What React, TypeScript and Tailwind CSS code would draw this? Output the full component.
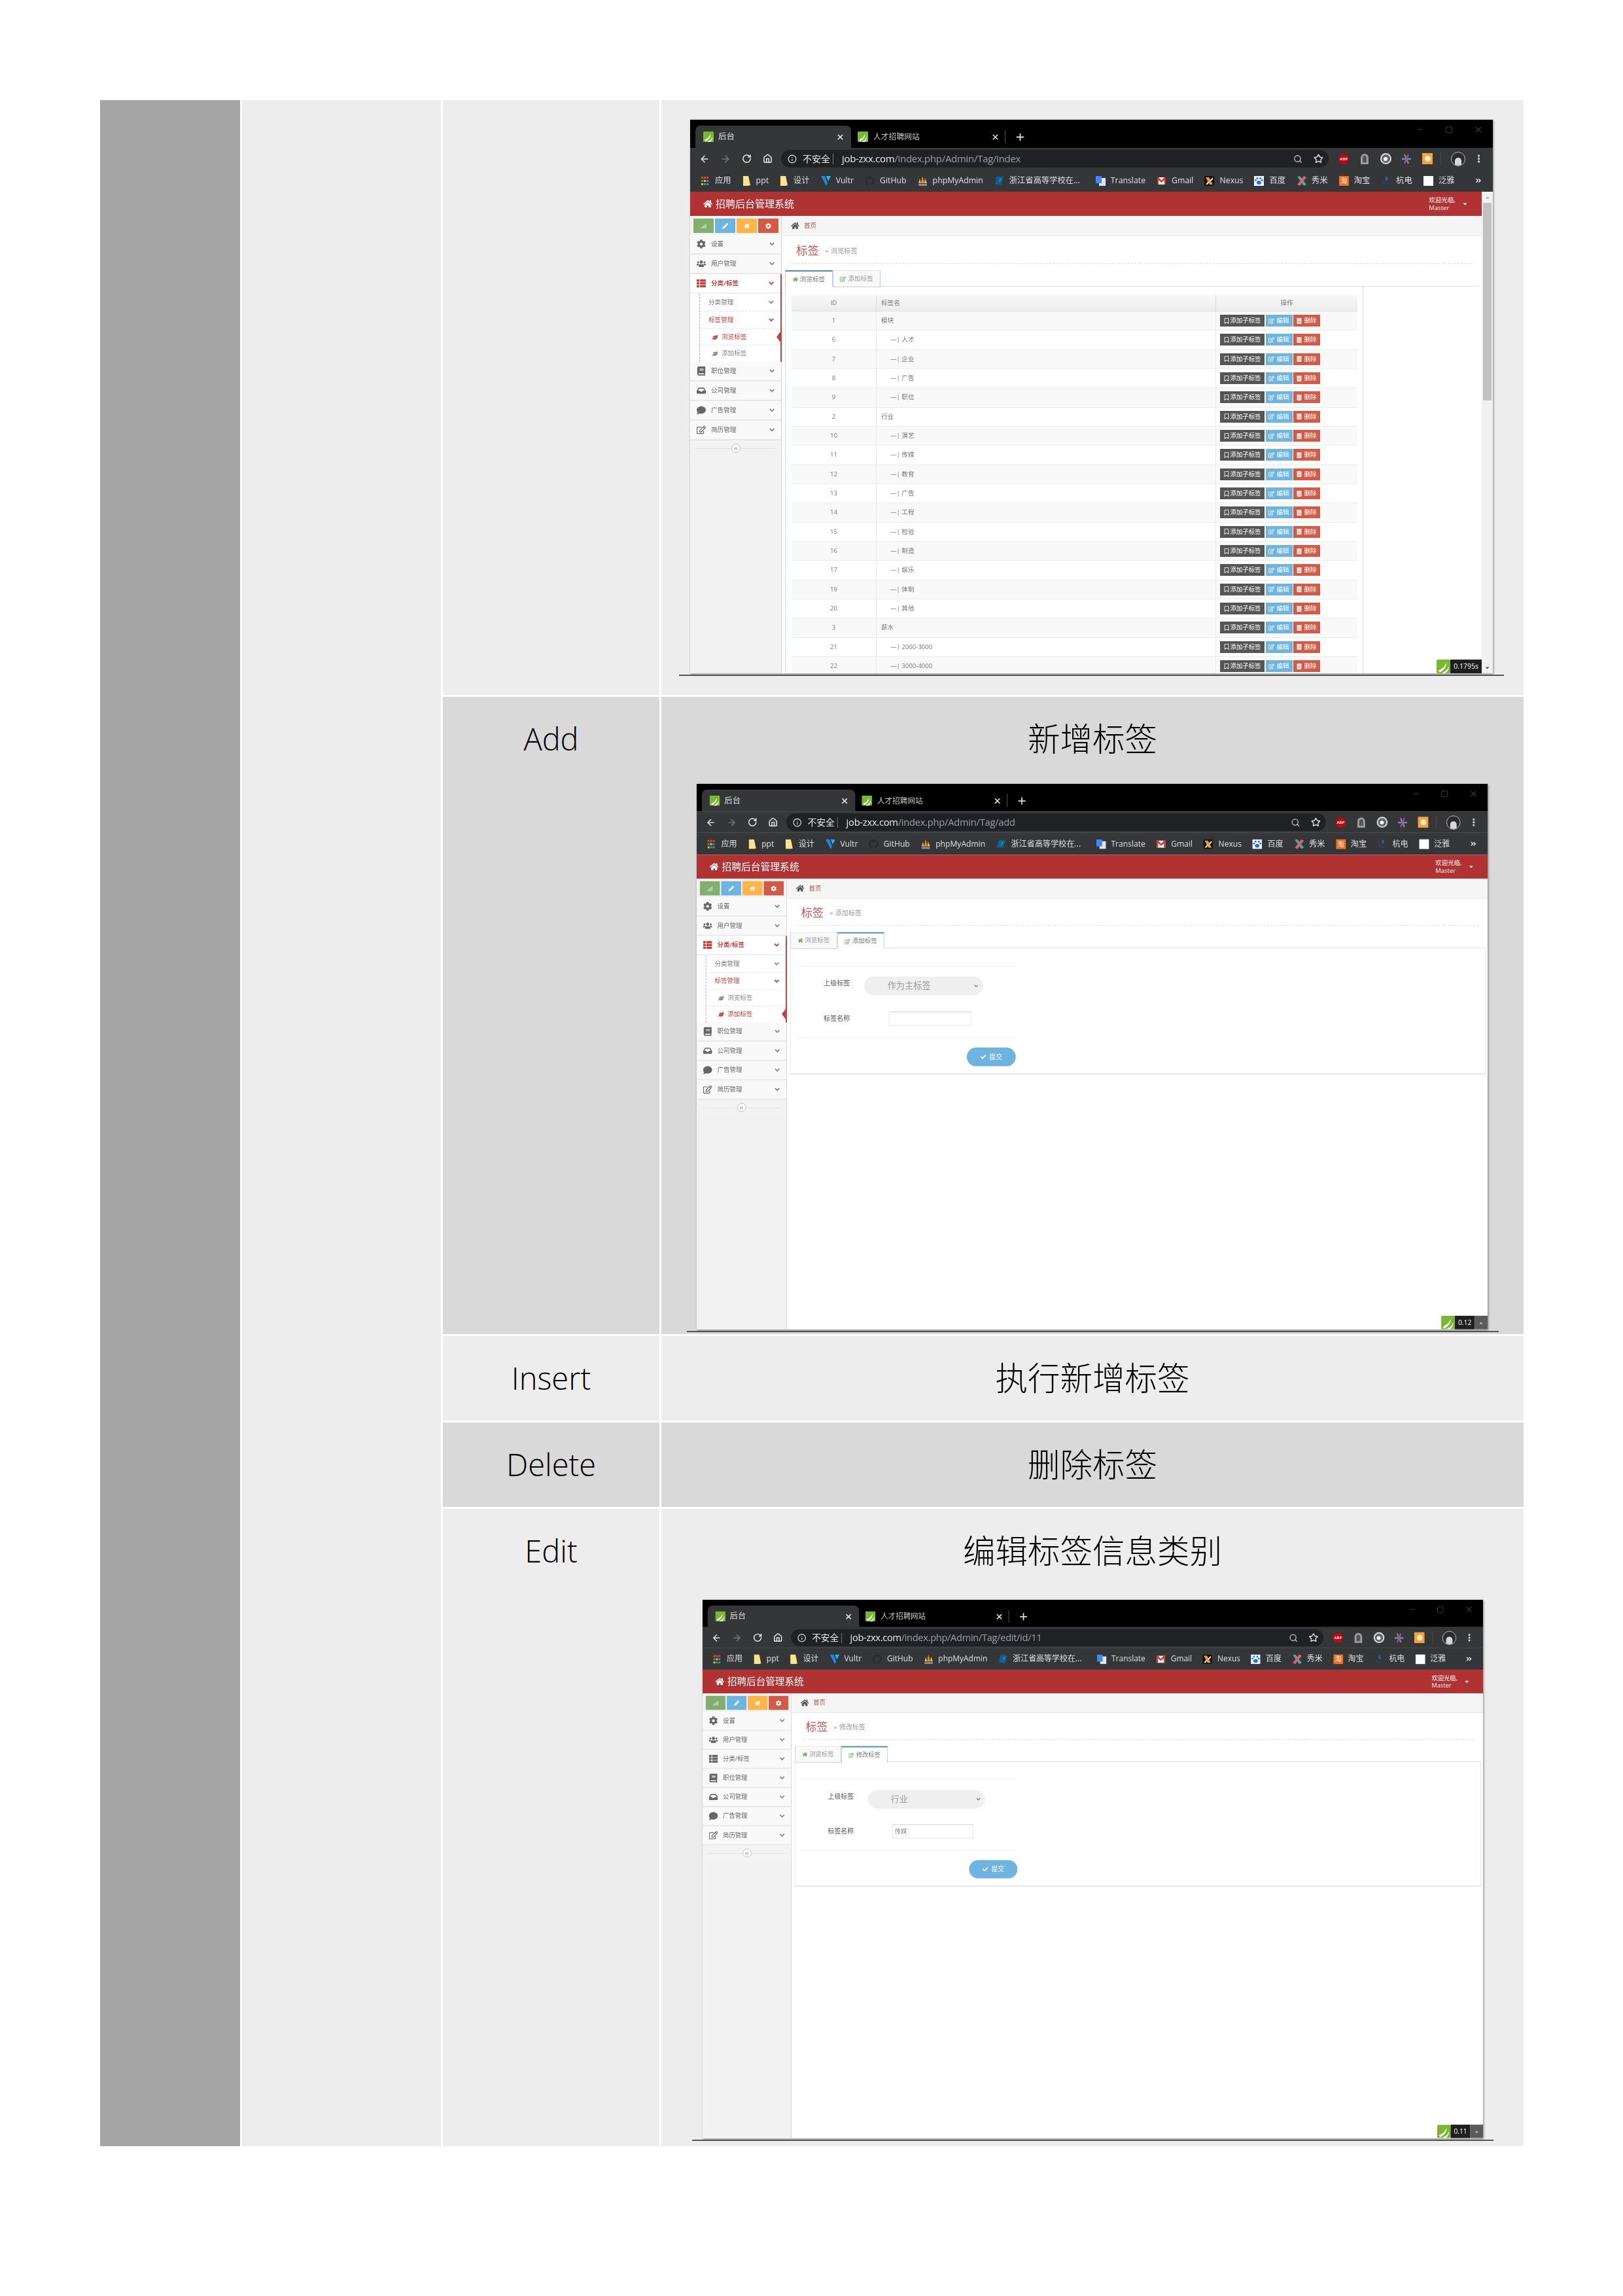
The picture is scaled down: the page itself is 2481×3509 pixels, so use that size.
import React from "react";
import {
  FaAngleDoubleLeft,
  FaAngleDoubleRight,
  FaAngleDown,
  FaBook,
  FaCaretDown,
  FaCaretUp,
  FaCheck,
  FaChevronDown,
  FaCog,
  FaComment,
  FaGithub,
  FaHome,
  FaInbox,
  FaLeaf,
  FaPencilAlt,
  FaRegBookmark,
  FaRegEdit,
  FaSignal,
  FaThList,
  FaTrashAlt,
  FaUsers,
} from "react-icons/fa";
import {
  ArrowLeft,
  ArrowRight,
  EllipsisVertical,
  House,
  Info,
  Minus,
  Plus,
  RotateCw,
  Search,
  Square,
  Star,
  X,
} from "lucide-react";

const BASE_WIDTH = 1227;
const BASE_HEIGHT = 846;

// favicon of the admin site
const Favicon = ({ className = "w-[16px] h-[16px]" }: { className?: string }) => (
  <svg viewBox="0 0 16 16" className={className}>
    <rect width="16" height="16" rx="1.5" fill="#7ab832" />
    <path d="M2 13 C5 11 9 10 11 4 C12 8 9 12 4 15 Z" fill="#fff" />
    <path d="M7 15 C10 14 13 12 14 8 C14.5 11 13 14 10 16 L7 16 Z" fill="#fff" />
  </svg>
);

const BookmarkIcon = ({ name }: { name: string }) => {
  const size = "w-[15px] h-[15px] shrink-0";
  switch (name) {
    case "apps":
      return (
        <svg viewBox="0 0 15 15" className={size}>
          {[
            ["#ea4335", 2, 1], ["#ea4335", 6, 1], ["#ea4335", 10, 1],
            ["#34a853", 2, 6], ["#fbbc05", 6, 6], ["#4285f4", 10, 6],
            ["#fbbc05", 2, 11], ["#4285f4", 6, 11], ["#34a853", 10, 11],
          ].map(([c, x, y], i) => (
            <rect key={i} x={x as number} y={y as number} width="3" height="3" fill={c as string} />
          ))}
        </svg>
      );
    case "folder":
      return (
        <svg viewBox="0 0 13 15" className="w-[13px] h-[15px] shrink-0">
          <path d="M1 0 H9 L12 14 L9 15 H1 Z" fill="#fbe38e" />
        </svg>
      );
    case "vultr":
      return (
        <svg viewBox="0 0 15 15" className={size}>
          <path d="M0 0 H6 L10 11 L8 15 Z" fill="#1e88e5" />
          <path d="M8 0 H15 L11 8 Z" fill="#29b6f6" />
        </svg>
      );
    case "github":
      return <FaGithub className={`${size} text-[#2a2b2d]`} />;
    case "pma":
      return (
        <svg viewBox="0 0 15 15" className={size}>
          <path d="M7 0 L10 11 H5 Z" fill="#f29111" />
          <path d="M3 4 L5 11 H1 Z" fill="#e9b85f" />
          <path d="M11 3 L14 11 H10 Z" fill="#e9b85f" />
          <rect x="1" y="12" width="13" height="3" fill="#8d8d9e" />
        </svg>
      );
    case "zj":
      return (
        <svg viewBox="0 0 15 15" className={size}>
          <path d="M3 1 H14 L11 13 H1 Z" fill="#0e5d9c" />
          <path d="M8 4 L11 4 L7 11 Z" fill="#1ea66a" />
        </svg>
      );
    case "translate":
      return (
        <svg viewBox="0 0 15 15" className={`${size} ml-[7px]`}>
          <rect x="5" y="3" width="10" height="12" fill="#dfe6f2" />
          <rect x="0" y="0" width="9" height="11" fill="#4285f4" />
        </svg>
      );
    case "gmail":
      return (
        <svg viewBox="0 0 15 15" className={size}>
          <rect x="1" y="2" width="13" height="11" fill="#f5f5f5" />
          <path d="M1 2 H3 L7.5 7 L12 2 H14 V13 H12 V6 L7.5 10 L3 6 V13 H1 Z" fill="#d93025" />
        </svg>
      );
    case "nexus":
      return (
        <svg viewBox="0 0 15 15" className={size}>
          <rect width="15" height="15" rx="2" fill="#111" />
          <path d="M2 2 L7 2 L13 13 L8 13 Z" fill="#f19a32" />
          <path d="M13 2 L8 7 L10 8 L13 5 Z M2 13 L6 8 L7 10 L5 13 Z" fill="#f7e1c2" />
        </svg>
      );
    case "baidu":
      return (
        <svg viewBox="0 0 15 15" className={size}>
          <rect width="15" height="15" fill="#f3f7ff" />
          <ellipse cx="7.5" cy="10" rx="3.5" ry="3" fill="#2b6ee6" />
          <circle cx="5" cy="3.5" r="1.5" fill="#2b6ee6" />
          <circle cx="10" cy="3.5" r="1.5" fill="#2b6ee6" />
          <circle cx="2.5" cy="6.5" r="1.4" fill="#2b6ee6" />
          <circle cx="12.5" cy="6.5" r="1.4" fill="#2b6ee6" />
        </svg>
      );
    case "xiumi":
      return (
        <svg viewBox="0 0 15 15" className={size}>
          <path d="M1 1 L5 0 L15 13 L11 15 Z" fill="#33b5a0" />
          <path d="M11 0 L15 2 L5 15 L1 13 Z" fill="#e85a71" />
        </svg>
      );
    case "taobao":
      return (
        <div className={`${size} bg-[#f2701f] text-white text-[10px] leading-[15px] text-center`}>淘</div>
      );
    case "hdu":
      return (
        <svg viewBox="0 0 15 15" className={size}>
          <path d="M2 8 C2 13 9 15 13 10 C10 12 5 12 4 7 Z" fill="#22407f" />
          <rect x="7" y="1" width="3" height="6" fill="#2d5fb3" />
        </svg>
      );
    default:
      return <div className={`${size} bg-white`} />;
  }
};

const bookmarks = [
  ["apps", "应用"], ["folder", "ppt"], ["folder", "设计"], ["vultr", "Vultr"],
  ["github", "GitHub"], ["pma", "phpMyAdmin"], ["zj", "浙江省高等学校在..."],
  ["translate", "Translate"], ["gmail", "Gmail"], ["nexus", "Nexus"], ["baidu", "百度"],
  ["xiumi", "秀米"], ["taobao", "淘宝"], ["hdu", "杭电"], ["blank", "泛雅"],
];

const BrowserChrome = ({ url }: { url: [string, string] }) => (
  <div className="flex flex-col shrink-0">
    {/* tab strip */}
    <div className="h-[43px] bg-black relative flex items-end pl-[8px]">
      <div className="w-[238px] h-[34px] bg-[#353637] rounded-t-[8px] flex items-center pl-[12px] pr-[10px] text-[#e4e4e4] text-[12.5px]">
        <Favicon />
        <span className="ml-[7px]">后台</span>
        <X className="ml-auto w-[13px] h-[13px]" strokeWidth={3} />
      </div>
      <div className="w-[235px] h-[34px] flex items-center pl-[10px] pr-[8px] text-[#c9c9c9] text-[11.8px]">
        <Favicon />
        <span className="ml-[8px]">人才招聘网站</span>
        <X className="ml-auto w-[13px] h-[13px] text-[#ddd]" strokeWidth={3} />
      </div>
      <div className="w-px h-[20px] bg-[#555] mb-[7px]" />
      <Plus className="ml-[14px] mb-[8px] w-[17px] h-[17px] text-[#ddd]" strokeWidth={2.5} />
      <div className="absolute right-[15px] top-[8px] flex items-center gap-[32px] text-[#3c3c3c]">
        <Minus className="w-[12px] h-[12px]" />
        <Square className="w-[12px] h-[13px]" />
        <X className="w-[14px] h-[14px]" />
      </div>
    </div>
    {/* toolbar */}
    <div className="h-[33px] bg-[#353637] flex items-center pl-[6px] pr-[13px] text-[#e8eaed]">
      <div className="w-[32px] flex justify-center"><ArrowLeft className="w-[16px] h-[16px]" strokeWidth={2.2} /></div>
      <div className="w-[32px] flex justify-center"><ArrowRight className="w-[16px] h-[16px] text-[#77797c]" strokeWidth={2.2} /></div>
      <div className="w-[32px] flex justify-center"><RotateCw className="w-[15px] h-[15px]" strokeWidth={2.4} /></div>
      <div className="w-[32px] flex justify-center"><House className="w-[15px] h-[15px]" strokeWidth={2.4} /></div>
      <div className="ml-[5px] flex-1 h-[27px] rounded-full bg-[#202124] flex items-center pl-[10px] pr-[8px]">
        <Info className="w-[14px] h-[14px]" />
        <span className="ml-[9px] text-[14px]">不安全</span>
        <div className="ml-[4px] w-px h-[16px] bg-[#777]" />
        <span className="ml-[13px] text-[15px] tracking-[-0.3px] whitespace-nowrap">
          {url[0]}
          <span className="text-[#9aa0a6]">{url[1]}</span>
        </span>
        <Search className="ml-auto w-[14px] h-[14px] text-[#c4c7c9]" strokeWidth={2.2} />
        <Star className="ml-[17px] w-[15px] h-[15px]" strokeWidth={2.2} />
      </div>
      <div className="ml-[7px] w-[32px] flex justify-center">
        <div className="w-[16px] h-[16px] rounded-full bg-[#c40510] text-white text-[6px] font-bold leading-[16px] text-center">ABP</div>
      </div>
      <div className="w-[32px] flex justify-center">
        <div className="w-[12px] h-[16px] rounded-t-full border-[3px] border-[#9b9b9b] bg-[#555]" />
      </div>
      <div className="w-[32px] flex justify-center">
        <div className="w-[17px] h-[17px] rounded-full border-[2px] border-[#ddd] bg-[#666] flex items-center justify-center">
          <div className="w-[6px] h-[6px] rounded-full bg-white" />
        </div>
      </div>
      <div className="w-[32px] flex justify-center">
        <svg viewBox="0 0 16 16" className="w-[16px] h-[16px]">
          <path d="M1 8 H15" stroke="#3ea7e8" strokeWidth="2.4" />
          <path d="M5 1 L11 15" stroke="#e8662b" strokeWidth="2.4" />
          <path d="M11 1 L5 15" stroke="#7b53c8" strokeWidth="2.4" />
        </svg>
      </div>
      <div className="w-[32px] flex justify-center">
        <div className="w-[16px] h-[17px] bg-[#f5a33b] flex items-center justify-center">
          <div className="w-[9px] h-[9px] rounded-full bg-[#fdeacb]" />
        </div>
      </div>
      <div className="mx-[4px] w-px h-[20px] bg-[#4a4a4a]" />
      <div className="w-[44px] flex justify-center">
        <div className="w-[22px] h-[22px] rounded-full bg-[#2c2c30] border border-[#bbb] flex justify-center items-end overflow-hidden">
          <div className="w-[10px] h-[12px] rounded-t-full bg-[#d8d8d8]" />
        </div>
      </div>
      <div className="w-[18px] flex justify-center"><EllipsisVertical className="w-[15px] h-[15px]" strokeWidth={3} /></div>
    </div>
    {/* bookmarks */}
    <div className="h-[34px] bg-[#353637] flex items-center pl-[15px] gap-[17px] text-[#dfe1e5] text-[12.3px] relative">
      {bookmarks.map(([icon, label], i) => (
        <div key={i} className="flex items-center gap-[8px] whitespace-nowrap">
          <BookmarkIcon name={icon} />
          <span>{label}</span>
        </div>
      ))}
      <FaAngleDoubleRight className="absolute right-[17px] top-[12px] w-[10px] h-[10px]" />
    </div>
  </div>
);

const Chevron = ({ className = "text-[#8a8a8a]" }: { className?: string }) => (
  <FaAngleDown className={`ml-auto mr-[8px] w-[12px] h-[12px] ${className}`} />
);

const MenuItem = ({ icon, label, open = false }: { icon: React.ReactNode; label: string; open?: boolean }) => (
  <div
    className={`h-[30px] flex items-center pl-[9px] border-b-2 ${
      open ? "bg-white border-[#eeeeee] text-[#c5403f] font-semibold" : "bg-[#f9f9f9] border-[#e8e8e8] text-[#666]"
    }`}
  >
    <span className="w-[15px] flex justify-center text-[14px]">{icon}</span>
    <span className="ml-[8px] text-[9.6px]">{label}</span>
    <Chevron className={open ? "text-[#c5403f]" : "text-[#8a8a8a]"} />
  </div>
);

const Sidebar = ({ active }: { active: "browse" | "add" | null }) => (
  <div className="w-[140px] shrink-0 bg-[#f2f2f2] border-r border-[#d5d5d5] flex flex-col">
    <div className="h-[29px] pt-[4px] pl-[5px] flex gap-[2px]">
      <div className="w-[31px] h-[22px] bg-[#82af6f] flex items-center justify-center text-[#cfe2c6] text-[9px]"><FaSignal /></div>
      <div className="w-[31px] h-[22px] bg-[#6fb3e0] flex items-center justify-center text-white text-[9px]"><FaPencilAlt /></div>
      <div className="w-[31px] h-[22px] bg-[#ffb44b] flex items-center justify-center text-white text-[9px]"><FaHome /></div>
      <div className="w-[31px] h-[22px] bg-[#d15b47] flex items-center justify-center text-white text-[9px]"><FaCog /></div>
    </div>
    <MenuItem icon={<FaCog />} label="设置" />
    <MenuItem icon={<FaUsers />} label="用户管理" />
    {active ? (
      <div className="border-r-2 border-[#c9413f] -mr-px relative">
        <MenuItem icon={<FaThList className="text-[#c5403f]" />} label="分类/标签" open />
        <div className="bg-white pl-[14px]">
          <div className="border-l border-dashed border-[#e39a9a]">
            <div className="h-[27px] flex items-center pl-[13px] text-[9.6px] text-[#777] border-b border-dashed border-[#e4e4e4]">
              分类管理
              <Chevron />
            </div>
            <div className="h-[27px] flex items-center pl-[13px] text-[9.6px] text-[#c5403f] border-b border-dashed border-[#e4e4e4]">
              标签管理
              <Chevron className="text-[#c5403f]" />
            </div>
            <div className={`h-[25px] flex items-center pl-[18px] text-[9.6px] border-b border-dashed border-[#e4e4e4] ${active === "browse" ? "text-[#c5403f]" : "text-[#888]"}`}>
              <FaLeaf className="w-[9px] h-[9px] mr-[6px]" />
              浏览标签
            </div>
            <div className={`h-[25px] flex items-center pl-[18px] text-[9.6px] ${active === "add" ? "text-[#c5403f]" : "text-[#888]"}`}>
              <FaLeaf className="w-[9px] h-[9px] mr-[6px]" />
              添加标签
            </div>
          </div>
        </div>
        {/* little red arrow that points at the open page */}
        <div
          className={`absolute right-0 w-0 h-0 border-y-[8px] border-y-transparent border-r-[6px] border-r-[#c9413f] ${
            active === "browse" ? "top-[88px]" : "top-[113px]"
          }`}
        />
      </div>
    ) : (
      <MenuItem icon={<FaThList />} label="分类/标签" />
    )}
    <MenuItem icon={<FaBook />} label="职位管理" />
    <MenuItem icon={<FaInbox />} label="公司管理" />
    <MenuItem icon={<FaComment />} label="广告管理" />
    <MenuItem icon={<FaRegEdit />} label="简历管理" />
    <div className="h-[24px] bg-[#f3f3f3] flex items-center px-[8px]">
      <div className="h-px flex-1 bg-[#e0e0e0]" />
      <div className="w-[14px] h-[14px] rounded-full border border-[#c0c0c0] bg-white flex items-center justify-center text-[#aaa] text-[7px]">
        <FaAngleDoubleLeft />
      </div>
      <div className="h-px flex-1 bg-[#e0e0e0]" />
    </div>
  </div>
);

const Tabs = ({ second, activeIndex }: { second: string; activeIndex: 0 | 1 }) => {
  const tab = (active: boolean) =>
    `w-[73px] h-[26px] -mb-px flex items-center justify-center gap-[3px] text-[9.6px] border-x border-[#c5d0dc] ${
      active ? "bg-white border-t-2 border-t-[#4c8fbd] text-[#777] z-10" : "bg-[#f9f9f9] border-t border-t-[#dfe6ec] text-[#999] border-b border-b-[#c5d0dc]"
    }`;
  return (
    <div className="h-[25px] flex border-b border-[#d5dfe6] mt-[10px] ml-[5px] mr-[3px]">
      <div className={tab(activeIndex === 0)}>
        <FaHome className="w-[8px] h-[8px] text-[#69aa46]" />
        浏览标签
      </div>
      <div className={tab(activeIndex === 1)}>
        <FaRegEdit className="w-[9px] h-[9px] text-[#69aa46]" />
        {second}
      </div>
    </div>
  );
};

const PageHead = ({ sub }: { sub: string }) => (
  <>
    <div className="h-[31px] shrink-0 bg-[#f5f5f5] border-b border-[#e8e8e8] flex items-center pl-[14px]">
      <FaHome className="w-[13px] h-[12px] text-[#555]" />
      <span className="ml-[7px] text-[9.6px] text-[#b5524f]">首页</span>
    </div>
    <div className="h-[42px] shrink-0 ml-[15px] mr-[14px] border-b border-dashed border-[#e0e0e0] flex items-center pl-[7px] pt-[2px]">
      <span className="text-[17.5px] text-[#c7595d]">标签</span>
      <FaAngleDoubleRight className="ml-[9px] w-[6px] h-[6px] text-[#aaa] mt-[3px]" />
      <span className="ml-[3px] text-[10.2px] text-[#999] mt-[3px]">{sub}</span>
    </div>
  </>
);

const tagRows: [string, string, boolean][] = [
  ["1", "模块", false], ["6", "人才", true], ["7", "企业", true], ["8", "广告", true],
  ["9", "职位", true], ["2", "行业", false], ["10", "演艺", true], ["11", "传媒", true],
  ["12", "教育", true], ["13", "广告", true], ["14", "工程", true], ["15", "检验", true],
  ["16", "制造", true], ["17", "娱乐", true], ["19", "体制", true], ["20", "其他", true],
  ["3", "薪水", false], ["21", "2000-3000", true], ["22", "3000-4000", true],
];

const TagTable = () => (
  <div className="w-[884px] ml-[5px] border-x border-[#d5dfe6] pl-[9px] pt-[13px] flex-1">
    <div className="w-[865px]">
      <div className="grid grid-cols-[130px_519px_216px] h-[25px] items-center text-[9.6px] text-[#777] bg-gradient-to-b from-[#f8f8f8] to-[#ececec] border-b border-[#ddd]">
        <div className="h-full flex items-center justify-center border-r border-[#ddd]">ID</div>
        <div className="h-full flex items-center pl-[7px] border-r border-[#ddd]">标签名</div>
        <div className="text-center">操作</div>
      </div>
      {tagRows.map(([id, name, child], i) => (
        <div
          key={id}
          className={`grid grid-cols-[130px_519px_216px] h-[29.33px] border-b border-[#ececec] text-[9.6px] text-[#777] ${
            i % 2 === 0 ? "bg-[#f9f9f9]" : "bg-white"
          }`}
        >
          <div className="h-full flex items-center justify-center border-r border-[#e8e8e8]">{id}</div>
          <div className="h-full flex items-center pl-[7px] border-r border-[#e8e8e8]">
            {child ? <span className="ml-[14px]">—|&nbsp;{name}</span> : name}
          </div>
          <div className="h-full flex items-center gap-[1.5px] pl-[6px] text-white">
            <div className="w-[68px] h-[18px] bg-[#555] flex items-center justify-center gap-[2px] whitespace-nowrap text-[9.4px]">
              <FaRegBookmark className="w-[8px] h-[9px]" />
              添加子标签
            </div>
            <div className="w-[41px] h-[18px] bg-[#6fb3e0] flex items-center justify-center gap-[3px]">
              <FaRegEdit className="w-[9px] h-[9px]" />
              编辑
            </div>
            <div className="w-[41px] h-[18px] bg-[#d15b47] flex items-center justify-center gap-[3px]">
              <FaTrashAlt className="w-[8px] h-[9px]" />
              删除
            </div>
          </div>
        </div>
      ))}
    </div>
  </div>
);

const TagForm = ({ parent, value }: { parent: string; value: string }) => (
  <div className="ml-[5px] mr-[3px] h-[196px] border border-t-0 border-[#e3e8ec] border-b-2 pt-[27px]">
    <div className="w-[340px] ml-[9px] flex flex-col">
      <div className="h-px bg-[#eeeeee]" />
      <div className="mt-[16px] flex pl-[42px]">
        <div className="w-[63px] text-[10.2px] text-[#555] pt-[3px]">上级标签</div>
        <div className="w-[184px] h-[29px] rounded-full bg-[#efefef] flex items-center pl-[36px] pr-[7px] text-[13.4px] text-[#999]">
          {parent}
          <FaChevronDown className="ml-auto w-[7px] h-[7px] text-[#666]" />
        </div>
      </div>
      <div className="mt-[25px] flex items-center pl-[42px]">
        <div className="w-[101px] text-[10.2px] text-[#555]">标签名称</div>
        <div className="w-[128px] h-[22px] border border-[#e5e5e5] border-t-[#cfcfcf] flex items-center pl-[3px] text-[9.6px] text-[#888]">
          {value}
        </div>
      </div>
      <div className="mt-[18px] h-px bg-[#eeeeee]" />
      <div className="mt-[15px] self-end w-[76px] h-[29px] rounded-full bg-[#6fb3e0] flex items-center justify-center gap-[5px] text-white text-[10px]">
        <FaCheck className="w-[9px] h-[9px]" />
        提交
      </div>
    </div>
  </div>
);

const Badge = ({ time, arrow }: { time: string; arrow: boolean }) => (
  <div className="absolute right-0 bottom-0 h-[21px] flex text-[10.5px] text-white z-20">
    <Favicon className="w-[21px] h-[21px]" />
    <div className="h-full px-[5px] bg-[#1f1f1f] flex items-center">{time}</div>
    {arrow && (
      <div className="h-full w-[20px] bg-[#5a5a5a] flex items-center justify-center text-[#ccc]">
        <FaCaretUp className="w-[8px] h-[8px]" />
      </div>
    )}
  </div>
);

const Scrollbar = () => (
  <div className="w-[17px] shrink-0 bg-[#f1f1f1] flex flex-col items-center text-[#a3a3a3]">
    <div className="h-[17px] flex items-center justify-center"><FaCaretUp className="w-[8px] h-[8px]" /></div>
    <div className="w-[13px] h-[302px] bg-[#c1c1c1]" />
    <div className="mt-auto h-[17px] flex items-center justify-center text-[#555]"><FaCaretDown className="w-[9px] h-[9px]" /></div>
  </div>
);

type ShotProps = {
  width: number;
  offset: number;
  lineWidth: number;
  url: [string, string];
  active: "browse" | "add" | null;
  sub: string;
  time: string;
  scroll?: boolean;
  children: React.ReactNode;
  tabs: React.ReactNode;
};

// A screenshot pasted in the document: drawn at one fixed size, then scaled to the size it has on the page
const BrowserShot = ({ width, offset, lineWidth, url, active, sub, time, scroll = false, children, tabs }: ShotProps) => {
  const scale = width / BASE_WIDTH;
  return (
    <div className="flex flex-col">
      <div className="overflow-hidden shadow-[1px_1px_3px_rgba(0,0,0,0.45)] relative" style={{ width, height: BASE_HEIGHT * scale }}>
        <div
          className="flex flex-col bg-white origin-top-left font-['Open_Sans','Noto_Sans_CJK_SC',sans-serif] blur-[0.5px]"
          style={{ width: BASE_WIDTH, height: BASE_HEIGHT, transform: `scale(${scale})` }}
        >
          <BrowserChrome url={url} />
          <div className="flex flex-1 min-h-0">
            <div className="flex-1 min-w-0 flex flex-col relative">
              <div className="h-[37px] shrink-0 bg-[#b03232] flex items-center pl-[20px] pr-[21px] text-white">
                <FaHome className="w-[14px] h-[13px]" />
                <span className="ml-[5px] text-[15px]">招聘后台管理系统</span>
                <div className="ml-auto text-[9.6px] leading-[12px]">
                  <div>欢迎光临,</div>
                  <div>Master</div>
                </div>
                <FaCaretDown className="ml-[10px] w-[9px] h-[9px]" />
              </div>
              <div className="flex flex-1 min-h-0 overflow-hidden">
                <Sidebar active={active} />
                <div className="flex-1 min-w-0 flex flex-col">
                  <PageHead sub={sub} />
                  {tabs}
                  {children}
                </div>
              </div>
              <Badge time={time} arrow={!scroll} />
            </div>
            {scroll && <Scrollbar />}
          </div>
        </div>
      </div>
      {/* rule of the document under the picture */}
      <div className="mt-[2px] h-[2px] bg-[#555]" style={{ width: lineWidth, marginLeft: -offset }} />
    </div>
  );
};

const CellLabel = ({ children, latin = false }: { children: React.ReactNode; latin?: boolean }) => (
  <div
    className={`h-[129px] flex items-center justify-center font-light text-black font-['Open_Sans','Noto_Sans_CJK_SC',sans-serif] ${
      latin ? "text-[47px]" : "text-[49.5px]"
    }`}
  >
    {children}
  </div>
);

export default function App() {
  return (
    <div className="w-[2481px] h-[3509px] bg-white pl-[153px] pt-[153px]">
      <div className="grid grid-cols-[214px_304px_331px_1318px] grid-rows-[909px_974px_129px_129px_974px] gap-[3px]">
        <div className="row-span-5 bg-[#a5a5a5]" />
        <div className="row-span-5 bg-[#ededed]" />

        <div className="bg-[#ededed]" />
        <div className="bg-[#ededed] pt-[30px] pl-[44px]">
          <BrowserShot
            width={1227}
            offset={17}
            lineWidth={1261}
            url={["job-zxx.com", "/index.php/Admin/Tag/index"]}
            active="browse"
            sub="浏览标签"
            time="0.1795s"
            scroll
            tabs={<Tabs second="添加标签" activeIndex={0} />}
          >
            <TagTable />
          </BrowserShot>
        </div>

        <div className="bg-[#d9d9d9]"><CellLabel latin>Add</CellLabel></div>
        <div className="bg-[#d9d9d9]">
          <CellLabel>新增标签</CellLabel>
          <div className="pt-[4px] pl-[54px]">
            <BrowserShot
              width={1209}
              offset={15}
              lineWidth={1241}
              url={["job-zxx.com", "/index.php/Admin/Tag/add"]}
              active="add"
              sub="添加标签"
              time="0.12"
              tabs={<Tabs second="添加标签" activeIndex={1} />}
            >
              <TagForm parent="作为主标签" value="" />
            </BrowserShot>
          </div>
        </div>

        <div className="bg-[#ededed]"><CellLabel latin>Insert</CellLabel></div>
        <div className="bg-[#ededed]"><CellLabel>执行新增标签</CellLabel></div>

        <div className="bg-[#d9d9d9]"><CellLabel latin>Delete</CellLabel></div>
        <div className="bg-[#d9d9d9]"><CellLabel>删除标签</CellLabel></div>

        <div className="bg-[#ededed]"><CellLabel latin>Edit</CellLabel></div>
        <div className="bg-[#ededed]">
          <CellLabel>编辑标签信息类别</CellLabel>
          <div className="pt-[10px] pl-[63px]">
            <BrowserShot
              width={1193}
              offset={16}
              lineWidth={1225}
              url={["job-zxx.com", "/index.php/Admin/Tag/edit/id/11"]}
              active={null}
              sub="修改标签"
              time="0.11"
              tabs={<Tabs second="修改标签" activeIndex={1} />}
            >
              <TagForm parent="行业" value="传媒" />
            </BrowserShot>
          </div>
        </div>
      </div>
    </div>
  );
}
